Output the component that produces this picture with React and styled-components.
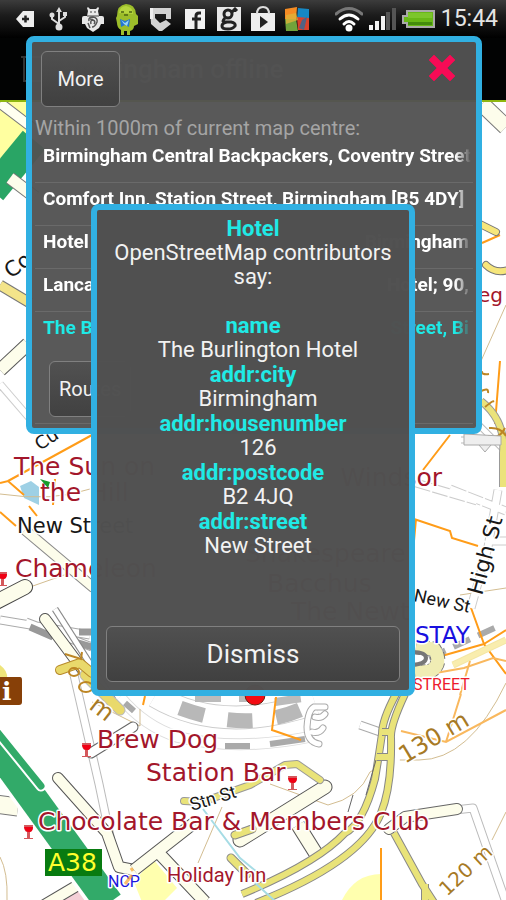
import React from 'react';
import styled, { createGlobalStyle, css } from 'styled-components';

const GlobalStyle = createGlobalStyle`
  *, *::before, *::after { box-sizing: border-box; }
  body { margin: 0; background: #fff; }
`;

const Screen = styled.div`
  position: relative;
  display: flex;
  flex-direction: column;
  min-height: 100vh;
  overflow: hidden;
  font-family: Roboto, "Liberation Sans", sans-serif;
  color: #f2f2f2;
`;

const StatusBar = styled.header`
  display: flex;
  align-items: center;
  justify-content: space-between;
  height: 38px;
  padding: 0 8px;
  background: linear-gradient(#3c3c3c, #1c1c1c 40%, #000);
`;

const Notifications = styled.div`
  display: grid;
  grid-template-columns: repeat(9, 34px);
  justify-items: center;
  align-items: center;
`;

const SystemIcons = styled.div`
  display: flex;
  align-items: center;
  gap: 6px;
`;

const Clock = styled.time`
  font-size: 23px;
  line-height: 38px;
  color: #e4e4e4;
`;

const TitleBar = styled.div`
  display: flex;
  align-items: center;
  gap: 12px;
  height: 64px;
  padding: 0 20px;
  background: #020303;
  border-bottom: 2px solid #8fb70f;
`;

const Title = styled.h1`
  margin: 0;
  font-size: 26px;
  font-weight: 500;
  color: #4c4c4c;
`;

const MapArea = styled.main`
  flex: 1;
  display: flex;
  background: #fff;
`;

const MapDrawing = styled.svg`
  display: block;
  width: 100%;
  height: 798px;
`;

const dialogFrame = css`
  position: absolute;
  border: 6px solid #31b0e2;
  border-radius: 8px;
`;

const PlacesDialog = styled.section`
  ${dialogFrame}
  top: 36px;
  left: 26px;
  right: 24px;
  padding: 9px 3px 4px;
  background: rgba(82, 82, 82, 0.96);
`;

const DetailDialog = styled.section`
  ${dialogFrame}
  top: 204px;
  left: 91px;
  right: 91px;
  display: flex;
  flex-direction: column;
  height: 492px;
  padding: 6px 9px 8px;
  background: rgba(80, 80, 80, 0.99);
  font-size: 22px;
  text-align: center;
`;

const DialogTop = styled.div`
  display: flex;
  justify-content: space-between;
  align-items: flex-start;
  padding: 0 17px 0 6px;
`;

const Button = styled.button`
  height: 56px;
  min-width: 79px;
  padding: 0 9px;
  border: 1px solid #808080;
  border-radius: 6px;
  background: linear-gradient(rgba(80, 80, 80, 0.9), rgba(62, 62, 62, 0.9));
  color: #f2f2f2;
  font: 400 ${(p) => (p.$large ? 26 : 20)}px Roboto, sans-serif;
`;

const CloseButton = styled.button`
  display: flex;
  padding: 3px 0;
  border: 0;
  background: none;
`;

const Caption = styled.h2`
  margin: 9px 0 0;
  font-size: 20px;
  font-weight: 400;
  line-height: 24px;
  color: #a5a5a5;
`;

const PlaceList = styled.ul`
  margin: 0;
  padding: 0;
  list-style: none;
`;

const PlaceItem = styled.li`
  border-bottom: 1px solid #6a6a6a;
  &:last-child { border-bottom: 0; }
`;

const PlaceButton = styled.button`
  display: flex;
  justify-content: space-between;
  width: 100%;
  height: 42px;
  padding: 2px 4px 0 8px;
  border: 0;
  background: none;
  color: ${(p) => (p.$selected ? '#1feae6' : '#fff')};
  font: bold 19px/28px Roboto, sans-serif;
  text-align: left;
  white-space: nowrap;
  mask-image: linear-gradient(to left, transparent 2px, #000 18px);
`;

const DialogActions = styled.div`
  display: flex;
  padding: 7px 14px 6px;
  border-bottom: 1px solid #6a6a6a;
`;

const Heading = styled.h2`
  margin: 0;
  font-size: 22px;
  font-weight: bold;
  line-height: 25px;
  color: #1feae6;
`;

const Intro = styled.p`
  margin: 0 0 24px;
  line-height: 24px;
`;

const Facts = styled.dl`
  flex: 1;
  margin: 0;
`;

const FactName = styled.dt`
  font-weight: bold;
  line-height: 25px;
  color: #1feae6;
`;

const FactValue = styled.dd`
  margin: 0;
  padding-left: 10px;
  line-height: 24px;
`;

const places = [
  { name: 'Birmingham Central Backpackers, Coventry Street' },
  { name: 'Comfort Inn, Station Street, Birmingham [B5 4DY]' },
  { name: 'Hotel', area: 'Birmingham' },
  { name: 'Lanca', area: 'Hotel; 90,' },
  { name: 'The B', area: 'Street, Bi', selected: true },
];

const facts = [
  ['name', 'The Burlington Hotel'],
  ['addr:city', 'Birmingham'],
  ['addr:housenumber', '126'],
  ['addr:postcode', 'B2 4JQ'],
  ['addr:street', 'New Street'],
];

function NotificationIcons() {
  return (
    <Notifications>
      <svg width="18" height="18" viewBox="0 0 18 18"><path d="M0 9 7 1H18V17H7Z" fill="#eee" /><path d="M6 9h7M9.500 5.500v7" stroke="#222" strokeWidth="2.500" /></svg>
      <svg width="20" height="24" viewBox="0 0 20 24" fill="none" stroke="#ddd" strokeWidth="2">
        <path d="M10 4v16M10 17 3 12V8M10 14l6-4V7" /><path d="m10 0 3 5H7Z" fill="#ddd" stroke="none" /><circle cx="10" cy="20" r="2.500" fill="#ddd" /><circle cx="3" cy="8" r="1.500" fill="#ddd" /><path d="M14 5h4v4h-4z" fill="#ddd" stroke="none" />
      </svg>
      <svg width="22" height="26" viewBox="0 0 22 26"><path d="m6 1 2 2h6l2-2 1 1-1 3 1 5h3q2 0 2 2v6h-3l-2 4-6 4-6-4-2-4H0v-6q0-2 2-2h3l1-5-1-3Z" fill="#e8e8e8" /><path d="M7 15q-1-4 4-4 5 1 4 5-2 5-5 5M9 18q-1-4 2-4 3 1 1 4M6 17l2 5M8 13q3 0 4 2" stroke="#555" fill="none" strokeWidth="1.500" /><path d="M9 5v2m4-2v2M5 10h12" stroke="#444" /></svg>
      <svg width="24" height="32" viewBox="0 0 24 32"><path d="M2 13Q2 2 11 1q9 0 10 10l2 2v8l-4 2q0 4-4 5v4h-3v-4H9v4H6v-5q-4-2-4-7l-1-5Z" fill="#9cbd2a" /><path d="M4 10Q5 3 11 3q7 1 7 8Z" fill="#b6d53f" /><path d="M6 9h3m5 0h3M9 12h4" stroke="#4c6412" strokeWidth="1.500" /><path d="m5 16 5 2 5-2-1 8-4-2-4 2Z" fill="#2476d3" /><path d="m6 17 4 3 4-3-2 6-3-2Z" fill="#9bd6f6" /></svg>
      <svg width="22" height="24" viewBox="0 0 22 24"><path d="M0 1h21v11h-5V7H5v4l5 5 6-3 5 4-9 7h-3l-8-7Z" fill="#d2d2d2" /><path d="M0 12V1h3v11Z" fill="#eee" /></svg>
      <svg width="20" height="20" viewBox="0 0 20 20"><path d="M0 0h20v20H0z" fill="#f1f1f1" /><path d="M16 4h-2q-3 0-3 3v13M7 10h9" stroke="#222" strokeWidth="3" fill="none" /></svg>
      <svg width="24" height="24" viewBox="0 0 24 24"><path d="M0 0h24v24H0z" fill="#e7e7e7" /><g fill="none" stroke="#222" strokeWidth="3"><circle cx="11" cy="7" r="4" /><path d="m15 5 3-3 2 2M8 11q-4 4 0 4h6q5 1 4 4-2 3-7 3-6 0-6-3 0-3 5-4" /></g></svg>
      <svg width="24" height="26" viewBox="0 0 24 26"><path d="M0 7h24v18H0z" fill="#eee" /><path d="M6 8q0-7 6-7t6 7" fill="none" stroke="#ddd" strokeWidth="2" /><path d="m9 10 8 6-8 6Z" fill="#222" /></svg>
      <svg width="25" height="26" viewBox="0 0 25 26"><path d="m0 3 12-2-1 12H0Z" fill="#f58b23" /><path d="m13 2 11 1v9l-12 1Z" fill="#1688c4" /><path d="M0 13h11l2 12H1Z" fill="#71a33b" /><path d="m12 11 12 1v12H13Z" fill="#d9412b" /><path d="m1 9 10-2 2 7L1 18Z" fill="#dfb13a" opacity=".8" /><path d="m17 14 5-3-3 13-5-2Z" fill="#1771ab" opacity=".7" /></svg>
    </Notifications>
  );
}

function SystemStatusIcons() {
  return (
    <SystemIcons>
      <svg width="28" height="26" viewBox="0 0 28 26" fill="none" strokeLinecap="round"><path d="M1 8Q14-3 27 8" stroke="#777" strokeWidth="3" /><path d="M5 13q9-8 18 0M9 18q5-5 10 0" stroke="#fff" strokeWidth="3" /><circle cx="14" cy="22" r="3.500" fill="#fff" /></svg>
      <svg width="27" height="22" viewBox="0 0 27 22"><path d="M0 17h4v5H0zM6 13h4v9H6zM12 8h4v14h-4z" fill="#f2f2f2" /><path d="M17 4h4v18h-4zM23 0h4v22h-4z" fill="#555" /></svg>
      <svg width="33" height="18" viewBox="0 0 33 18"><path d="M5 1h27v16H5v-4H1V6h4Z" fill="#68b817" stroke="#aaa" strokeWidth="2" /><path d="M6 3h24v5H6z" fill="#7cc62b" /><path d="M6 12h24v3H6z" fill="#438b0d" /></svg>
      <Clock>15:44</Clock>
    </SystemIcons>
  );
}

function Road({ d, width = 10, fill = '#fdfdeb', edge = '#777', cap = 'butt', dash }) {
  return (
    <g fill="none" strokeLinecap={cap} strokeLinejoin="round">
      <path d={d} stroke={edge} strokeWidth={width + 2} strokeDasharray={dash} />
      <path d={d} stroke={fill} strokeWidth={width} />
    </g>
  );
}

function Glass({ x, y }) {
  return (
    <g transform={`translate(${x} ${y})`}>
      <path d="M0 0h9q0 7-3 7v6h3v1H0v-1h3V7Q0 7 0 0Z" fill="#d4585c" />
      <path d="M0 2h9q0 5-4 5T0 2Z" fill="#f00014" />
    </g>
  );
}

const narrow = "Roboto, 'Liberation Sans', sans-serif";

function CityMap() {
  return (
    <MapDrawing viewBox="0 102 506 798" preserveAspectRatio="xMidYMin slice" role="img" aria-label="Map of central Birmingham">
      <path d="M0 102h506v798H0z" fill="#fff" />
      {/* Parks and built-up blocks */}
      <path d="M0 102h30v35L0 160Z" fill="#ffffa0" />
      <path d="m0 103 34 26" stroke="#777" strokeWidth="11" /><path d="m0 103 34 26" stroke="#fffff0" strokeWidth="9" />
      <path d="m-8 191 42-51" stroke="#29a565" strokeWidth="29" />
      <path d="m134 882 19-23 24 29-14 14h-21Z" fill="#ffffae" />
      <path d="M342 900q13-26 39-26v26Z" fill="#ffffae" />
      <path d="m55 900 26-15 18 15Z" fill="#f4d0d7" />
      <path d="M0 665q8 6 7 13H0Z" fill="#eee47a" />
      <path d="m20 486 11-5 8 6v18l-15-7Z" fill="#9ed0e5" />
      {/* Rail and station */}
      <g fill="none">
        <path d="M0 620q35 6 90 15M26 622l66 25" stroke="#aaa" strokeWidth="9" />
        <path d="M0 620q35 6 90 15M26 622l66 25" stroke="#fff" strokeWidth="7" />
        <path d="m30 627 23 10m26-5h13M75 642l17 5" stroke="#999" strokeWidth="7" />
        <path d="M120 697q24 29 58 40 60 15 136-1" stroke="#ddd" strokeWidth="12" />
        <path d="M120 697q24 29 58 40 60 15 136-1" stroke="#fff" strokeWidth="10" />
        <path d="m125 703 9 8m91 35h25m20-2 35-5" stroke="#aaa" strokeWidth="6" />
        <path d="M155 696q66 39 160 7" stroke="#ccc" strokeWidth="24" />
        <path d="M155 696q66 39 160 7" stroke="#fff" strokeWidth="22" />
        <path d="M180 708q73 27 130-3" stroke="#b8b8b8" strokeWidth="15" strokeDasharray="25 24" />
        <path d="M195 698h60m20 4 28-4" stroke="#bbb" strokeWidth="8" strokeDasharray="26 18" />
        <path d="M325 707h-11q-6 3-7 20 0 15 12 17m6-30q-4 5-10 3m8 11q-4 6-11 4" stroke="#aaa" strokeWidth="7" strokeLinecap="round" />
        <path d="M325 707h-11q-6 3-7 20 0 15 12 17m6-30q-4 5-10 3m8 11q-4 6-11 4" stroke="#fff" strokeWidth="5" strokeLinecap="round" />
        <path d="m429 658 70-32" stroke="#aaa" strokeWidth="6" strokeDasharray="18 9" />
      </g>
      {/* Contours and footpaths */}
      <g fill="none" stroke="#d3bd91" strokeWidth="1">
        <path d="M481 361 506 305M92 702l48 24 0-17M270 784l58 21q31-7 42-33l22-12h27q50 0 87-77M492 840l14-28M222 807l-24 56M30 587l37-13M0 857q8 15 7 43M460 595l46-7M0 494q53 8 90-5" />
      </g>
      <g fill="none" stroke="#ff9c18" strokeWidth="2">
        <path d="m0 483 8-2 16 14m-16-14 84-46M53 505l2-26M0 512l16 14m13-20 8 10M423 470l27-35M416 519l-2 22m0-22 36 12 2 7 26 8M470 605l14 39 22 30m-22-30 22-14m-22 14-53 15M500 361l-5 63M482 243l18-8M276 697l-4 33 29 10M381 848v52M145 696l-2 9" />
        <path d="m506 661-13-3-29 10-34 6M470 661l-10 34M401 731l45 11 60-32m-60 32 15-48" stroke="#f9b85e" />
      </g>
      {/* Minor streets */}
      <Road d="m0 370 28-26" width={12} edge="#555" />
      <Road d="m10 178 25 19" width={11} edge="#777" />
      <Road d="m0 384 31 36" width={6} fill="#fff" edge="#ccc" />
      <Road d="m25 530 69 58" width={9} edge="#888" />
      <Road d="m-4 602 29-15" width={14} cap="round" edge="#444" />
      <Road d="m55 609 58 91" width={5} fill="#fff" edge="#888" />
      <Road d="m45 619 38 51" width={10} cap="round" edge="#555" />
      <Road d="M74 675 99 784l13 62" width={7} fill="#fff" edge="#bbb" />
      <Road d="m91 753 42-26" width={9} fill="#fff" cap="round" edge="#666" />
      <Road d="m58 778 49 55 12 34 15 3" width={10} cap="round" edge="#555" />
      <Road d="m-5 804 23 3" width={17} edge="#777" />
      <Road d="m41 907 49-29" width={10} edge="#555" />
      <Road d="m134 870 60-47m-39 26 50 53" width={11} edge="#555" />
      <Road d="m240 840 85-53" width={13} cap="round" edge="#555" />
      <Road d="m298 825 20 32" width={13} edge="#555" />
      <Road d="m389 829 16-12 50-7 18-2 35 100" width={7} fill="#fff" edge="#bbb" />
      <Road d="m389 829 16-12 52-8" width={10} cap="round" edge="#666" />
      <Road d="m450 489 56 22m-8-21-10 57-17 61M416 483l61 18m13 40h16" width={7} fill="#fff" edge="#ccc" dash="16 2" />
      <Road d="m360 725 20 7" width={7} fill="#fff" edge="#aaa" />
      <Road d="m475 421 31 31m-45-12h38" width={5} fill="#fff" edge="#bbb" />
      <Road d="m482 104 24 23" width={15} edge="#777" />
      {/* Dual carriageway */}
      <g fill="none" stroke="#32aa69">
        <path d="m-10 739 118 163" stroke="#fff" strokeWidth="36" />
        <path d="m-10 739 119 164" strokeWidth="29" />
        <path d="m-6 728 47 58" stroke="#fff" strokeWidth="11" strokeLinecap="round" />
        <path d="m-6 728 47 58" strokeWidth="7" strokeLinecap="round" />
      </g>
      {/* Main roads */}
      <Road d="M404 694q-16 20-15 54 3 44-20 75-26 39-113 79" width={19} fill="#fff" edge="#fff" />
      <Road d="M396 694q-14 26-14 40-4 27-7 45-12 45-30 54-28 30-103 61" width={6} fill="#e9e379" edge="#888" />
      <Road d="M405 694q-15 32-14 44 1 48-10 75-19 48-125 90M382 732h9M377 757h13" width={6} fill="#e9e379" edge="#888" />
      <Road d="m394 833 28 51 13 20m-10-20 0 18" width={6} fill="#e9e379" edge="#888" />
      <Road d="m184 801 18 1 48-17 35-20 12-1 23 16" width={6} fill="#e9e379" edge="#999" cap="round" />
      <Road d="m235 835 17-6M231 858l16 16" width={7} fill="#e9e379" edge="#888" cap="round" />
      <Road d="m85 675 35 35" width={9} fill="#e9d96b" edge="#bbb" cap="round" />
      <Road d="m60 670 20-7 12 10" width={8} fill="#e9d96b" edge="#b88b2c" cap="round" />
      <Road d="m0 285 30 18" width={9} fill="#f3e48a" edge="#777" />
      <Road d="m480 224 16 8m-10 33q9 9 22 5" width={6} fill="#f6e67b" edge="#777" cap="round" />
      <Road d="M481 401q25 20 22 52v34" width={6} fill="#ebe37b" edge="#999" />
      <Road d="m416 647 18 2q9 14-3 22l-16 2" width={13} fill="#f0edb4" edge="#777" dash="5 3" />
      <Road d="m506 640-53 25" width={5} fill="#f9edae" edge="#f3e6a4" />
      <path d="M412 665q14-1 14-7t-14-6" fill="none" stroke="#777" strokeWidth="4" />
      <path d="m203 809 37 49 17 14m-5 8 24 22" stroke="#a6dce5" strokeWidth="2" fill="none" />
      <g fill="none" stroke="#bd8624" strokeWidth="2"><path d="m65 654 16 5 1-7M482 371q-1 4 7 3m-8 17q8-4 7 2m-3 14q10-8 8-5M489 428q12-1 17 8m-18 0q11 4 17-8" /><ellipse cx="74" cy="672" rx="5" ry="4" /><ellipse cx="86" cy="687" rx="7" ry="5" /></g>
      <path d="m464 434 37 2v9h-37zm15 11 6 7 6-7" fill="#eee" stroke="#aaa" />
      <path d="m353 795-5 17M376 760l-10 35" stroke="#666" fill="none" />
      {/* Place labels */}
      <g fontFamily="'DejaVu Sans', sans-serif" stroke="#fff" strokeWidth="3" paintOrder="stroke" strokeLinejoin="round">
        <g fontSize="25" fill="#a3162b">
          <text x="14" y="475">The Sun on</text><text x="40" y="501">the Hill</text><text x="15" y="577">Chameleon</text>
          <text x="442" y="486" textAnchor="end">Windsor</text><text x="97" y="748">Brew Dog</text>
          <text x="146" y="781">Station Bar</text><text x="38" y="830">Chocolate Bar &amp; Members Club</text>
          <text x="245" y="562">Shakespeare</text><text x="267" y="592">Bacchus</text><text x="291" y="620">The Newt</text>
          <text x="478" y="302" fontSize="20">eg</text><text x="167" y="882" fontFamily={narrow} fontSize="20">Holiday Inn</text>
        </g>
        <g fontSize="21" fill="#171717">
          <text x="17" y="533">New Street</text>
          <text transform="translate(482 596) rotate(-75)" fontSize="22">High St</text>
          <text transform="translate(413 601) rotate(12)" fontFamily={narrow} fontSize="18">New St</text>
          <text transform="translate(192 811) rotate(-17)" fontFamily={narrow} fontSize="18">Stn St</text>
          <text transform="translate(11 279) rotate(-37)">Co</text><text transform="translate(40 451) rotate(-34)" fontSize="18">Cu</text>
        </g>
        <text x="415" y="643" fontSize="23" fill="#1910df">STAY</text>
        <text x="413" y="690" fontSize="16" fontFamily={narrow} fill="#ed1b2c">STREET</text>
        <text x="108" y="887" fontSize="16" fontFamily={narrow} fill="#1b16dd">NCP</text>
        <g fill="#a77a25"><text transform="translate(405 764) rotate(-31)" fontSize="24">130 m</text><text transform="translate(447 897) rotate(-43)" fontSize="20">120 m</text><text transform="translate(88 708) rotate(38)" fontSize="24">m</text></g>
      </g>
      <path d="M45 849h57v27H45z" fill="#087b10" />
      <text x="48" y="871" fill="#ffff2d" fontFamily="'DejaVu Sans', sans-serif" fontSize="25">A38</text>
      <path d="M0 677h20q2 0 2 3v22q0 3-3 3H0Z" fill="#874008" />
      <text x="2" y="700" fill="#fff" fontFamily="'DejaVu Serif', serif" fontWeight="bold" fontSize="25">i</text>
      <circle cx="255" cy="695" r="10" fill="#f30b12" stroke="#621" />
      <Glass x={82} y={743} /><Glass x={24} y={825} /><Glass x={288} y={776} /><Glass x={-2} y={572} />
      <path d="m125 884 7-9m-1-7 2 3" fill="none" stroke="#f6a32e" strokeWidth="3" opacity=".7" />
      <path d="m40 479 10 3-2 6Z" fill="#159c2b" />
    </MapDrawing>
  );
}

export default function App() {
  return (
    <Screen>
      <GlobalStyle />
      <StatusBar><NotificationIcons /><SystemStatusIcons /></StatusBar>
      <TitleBar>
        <svg width="30" height="30" viewBox="0 0 30 30" fill="none" stroke="#333" strokeWidth="2"><path d="M1 3h28M4 3v24h22V3" /></svg>
        <Title>Birmingham offline</Title>
      </TitleBar>
      <MapArea><CityMap /></MapArea>

      <PlacesDialog role="dialog" aria-labelledby="places-caption">
        <DialogTop>
          <Button type="button">More</Button>
          <CloseButton type="button" aria-label="Close">
            <svg width="28" height="28" viewBox="0 0 28 28"><path d="m6 1 8 8 8-8 5 5-8 8 8 8-5 5-8-8-8 8-5-5 8-8-8-8Z" fill="#f70b56" stroke="#dd1450" strokeLinejoin="round" /></svg>
          </CloseButton>
        </DialogTop>
        <Caption id="places-caption">Within 1000m of current map centre:</Caption>
        <PlaceList>
          {places.map((place) => (
            <PlaceItem key={place.name}>
              <PlaceButton type="button" $selected={place.selected}>
                <span>{place.name}</span>
                {place.area && <span>{place.area}</span>}
              </PlaceButton>
            </PlaceItem>
          ))}
        </PlaceList>
        <DialogActions><Button type="button">Routes</Button></DialogActions>
      </PlacesDialog>

      <DetailDialog role="dialog" aria-labelledby="detail-heading">
        <Heading id="detail-heading">Hotel</Heading>
        <Intro>OpenStreetMap contributors say:</Intro>
        <Facts>
          {facts.map(([name, value]) => (
            <React.Fragment key={name}>
              <FactName>{name}</FactName>
              <FactValue>{value}</FactValue>
            </React.Fragment>
          ))}
        </Facts>
        <Button type="button" $large>Dismiss</Button>
      </DetailDialog>
    </Screen>
  );
}
